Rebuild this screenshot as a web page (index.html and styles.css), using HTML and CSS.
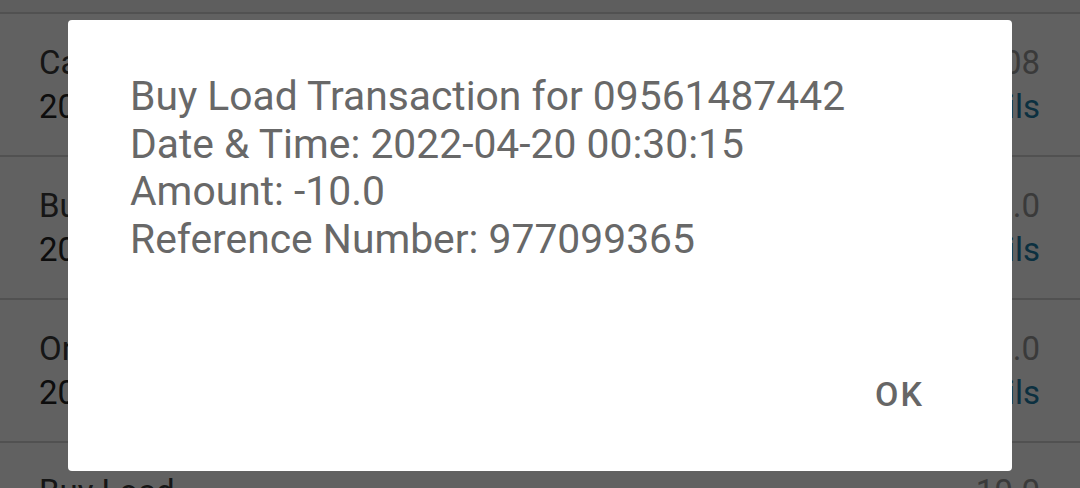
FILE: index.html
```html
<!DOCTYPE html>
<html lang="en">
<head>
    <meta charset="UTF-8">
    <meta name="viewport" content="width=device-width, initial-scale=1.0">
    <title>Transactions</title>
    <link rel="stylesheet" href="styles.css">
</head>
<body>
    <div class="list">
        <div class="top-strip"></div>
        <div class="row">
            <div class="row-left">
                <p class="title">Cash In</p>
                <p class="date">2022-04-20 08:12:44</p>
            </div>
            <div class="row-right">
                <p class="amount">100.08</p>
                <p class="link">Details</p>
            </div>
        </div>
        <div class="row">
            <div class="row-left">
                <p class="title">Buy Load</p>
                <p class="date">2022-04-20 00:30:15</p>
            </div>
            <div class="row-right">
                <p class="amount">-10.0</p>
                <p class="link">Details</p>
            </div>
        </div>
        <div class="row">
            <div class="row-left">
                <p class="title">Online Payment</p>
                <p class="date">2022-04-19 21:05:02</p>
            </div>
            <div class="row-right">
                <p class="amount">-50.0</p>
                <p class="link">Details</p>
            </div>
        </div>
        <div class="row">
            <div class="row-left">
                <p class="title">Buy Load</p>
                <p class="date">2022-04-19 10:11:40</p>
            </div>
            <div class="row-right">
                <p class="amount">-10.0</p>
                <p class="link">Details</p>
            </div>
        </div>
    </div>

    <div class="scrim"></div>

    <div class="dialog">
        <div class="message">
            <p>Buy Load Transaction for 09561487442</p>
            <p>Date &amp; Time: 2022-04-20 00:30:15</p>
            <p>Amount: -10.0</p>
            <p>Reference Number: 977099365</p>
        </div>
        <div class="actions">
            <button class="ok-btn">OK</button>
        </div>
    </div>
</body>
</html>
```

FILE: styles.css
```css
body {
    font-family: Roboto, "Noto Sans", sans-serif;
    margin: 0;
    width: 1080px;
    height: 488px;
    overflow: hidden;
    background: #fff;
    position: relative;
}
p {
    margin: 0;
}
.list {
    height: 488px;
    overflow: hidden;
}
.top-strip {
    height: 12px;
    background: #f6f6f6;
    border-bottom: 2px solid #d6d6d6;
}
.row {
    display: flex;
    justify-content: space-between;
    height: 141px;
    padding: 0 40px 0 39px;
    border-bottom: 2px solid #d6d6d6;
}
.row-left, .row-right {
    display: flex;
    flex-direction: column;
    justify-content: center;
    gap: 6px;
    font-size: 33px;
    line-height: 38px;
}
.row-right {
    align-items: flex-end;
}
.title {
    color: #3a3a3a;
}
.date {
    color: #222;
}
.amount {
    color: #9a9a9a;
}
.link {
    color: #1f7ea8;
}
.scrim {
    position: absolute;
    inset: 0;
    background: rgba(0, 0, 0, 0.62);
}
.dialog {
    position: absolute;
    left: 68px;
    top: 20px;
    width: 944px;
    height: 451px;
    box-sizing: border-box;
    background: #fff;
    border-radius: 4px;
    padding: 53px 62px 0;
    display: flex;
    flex-direction: column;
}
.message {
    color: #686868;
    font-size: 40.8px;
    line-height: 47.5px;
    flex: 1;
}
.actions {
    display: flex;
    justify-content: flex-end;
    padding-bottom: 57px;
}
.ok-btn {
    font-family: Roboto, sans-serif;
    font-weight: 500;
    font-size: 34px;
    letter-spacing: 2px;
    color: #666;
    background: none;
    border: none;
    padding: 0;
    margin-right: 26px;
}
```
